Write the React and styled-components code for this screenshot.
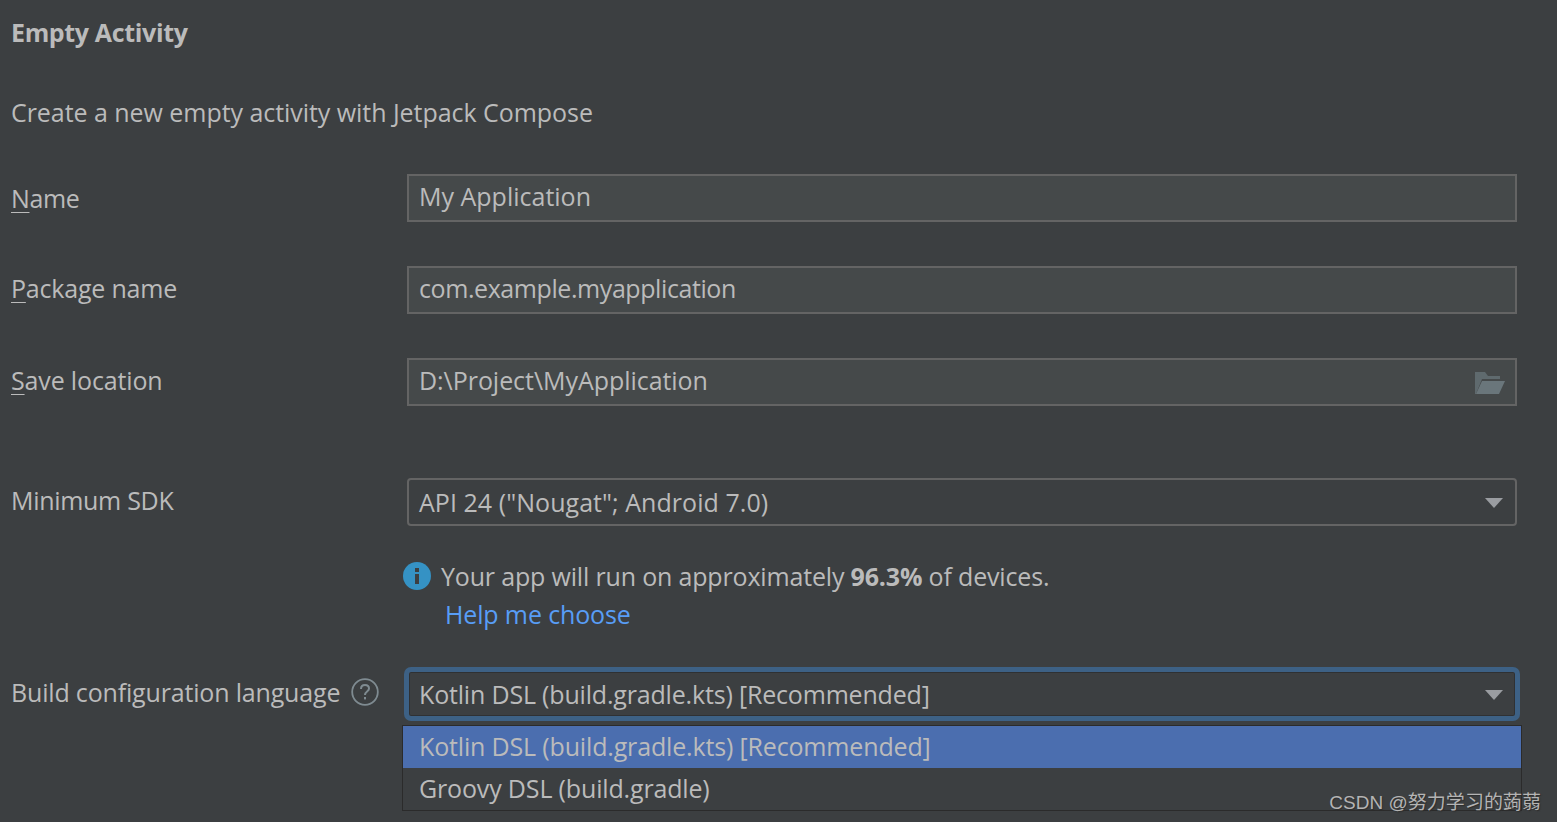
import React from 'react';
import styled, { createGlobalStyle } from 'styled-components';

const GlobalStyle = createGlobalStyle`
  html, body {
    margin: 0;
    padding: 0;
    background: #3c3f41;
  }
  body {
    font-family: "Open Sans", "Noto Sans", "Noto Sans CJK SC", sans-serif;
    color: #bbbbbb;
  }
`;

const FolderIcon = () => (
  <svg width="32" height="24" viewBox="0 0 32 24">
    <path d="M1 1h10l3 4h12v3H8L2 23H1z" fill="#5f6a6e" />
    <path d="M8 10h23l-6 13H2z" fill="#6a767b" />
  </svg>
);

const InfoIcon = () => (
  <svg width="28" height="28" viewBox="0 0 28 28">
    <circle cx="14" cy="14" r="14" fill="#3592c4" />
    <rect x="12" y="12" width="4" height="10" fill="#3c3f41" />
    <rect x="12" y="6" width="4" height="4" fill="#3c3f41" />
  </svg>
);

const HelpIcon = () => (
  <svg width="28" height="28" viewBox="0 0 28 28" fill="none">
    <circle cx="14" cy="14" r="12.8" stroke="#7f8b91" strokeWidth="1.8" />
    <path d="M10 11c0-2.6 1.8-4 4-4s4 1.4 4 3.6c0 3-4 3-4 6.4" stroke="#7f8b91" strokeWidth="2" />
    <rect x="13" y="19" width="2" height="2.4" fill="#7f8b91" />
  </svg>
);

const App = () => (
  <Page>
    <GlobalStyle />
    <Title>Empty Activity</Title>
    <Description>Create a new empty activity with Jetpack Compose</Description>
    <Row>
      <Label $track={-0.35}><span><u>N</u>ame</span></Label>
      <Field $track={0}>My Application</Field>
    </Row>
    <Row $top={44}>
      <Label $lift $track={-0.2}><span><u>P</u>ackage name</span></Label>
      <Field $track={-0.42}>com.example.myapplication</Field>
    </Row>
    <Row $top={44}>
      <Label $lift $track={-0.15}><span><u>S</u>ave location</span></Label>
      <Field $track={-0.05}>
        D:\Project\MyApplication
        <FolderSlot><FolderIcon /></FolderSlot>
      </Field>
    </Row>
    <Row $top={72}>
      <Label $lift $track={-0.3}><span>Minimum SDK</span></Label>
      <Combo $track={0.05}>
        API 24 ("Nougat"; Android 7.0)
        <Arrow />
      </Combo>
    </Row>
    <Info>
      <InfoLine>
        <InfoIcon />
        <span>Your app will run on approximately <b>96.3%</b> of devices.</span>
      </InfoLine>
      <HelpLink>Help me choose</HelpLink>
    </Info>
    <Row $top={38}>
      <Label $lift $track={-0.17}>
        <span>Build configuration language</span>
        <HelpIcon />
      </Label>
      <ComboWrap>
        <Combo $focused $track={-0.18}>
          Kotlin DSL (build.gradle.kts) [Recommended]
          <Arrow />
        </Combo>
        <Popup>
          <Option $selected>Kotlin DSL (build.gradle.kts) [Recommended]</Option>
          <Option>Groovy DSL (build.gradle)</Option>
        </Popup>
      </ComboWrap>
    </Row>
    <Watermark>CSDN @努力学习的蒟蒻</Watermark>
  </Page>
);

const Page = styled.div`
  position: relative;
  width: 1557px;
  height: 822px;
  overflow: hidden;
  box-sizing: border-box;
  padding: 0 40px 0 11px;
  background: #3c3f41;
  font-size: 25px;
  letter-spacing: -0.16px;
`;

const Title = styled.h1`
  margin: 0;
  padding-top: 14px;
  height: 36px;
  line-height: 36px;
  font-size: 25px;
  font-weight: 700;
  letter-spacing: -0.35px;
  color: #bbbbbb;
`;

const Description = styled.p`
  margin: 0;
  padding-top: 44px;
  height: 36px;
  line-height: 36px;
  letter-spacing: -0.05px;
  color: #bbbbbb;
`;

const Row = styled.div`
  display: flex;
  align-items: center;
  margin-top: ${({ $top }) => $top || 44}px;
`;

const Label = styled.label`
  display: flex;
  align-items: center;
  gap: 11px;
  width: 396px;
  flex: none;
  white-space: pre;
  padding-bottom: ${({ $lift }) => ($lift ? 4 : 0)}px;
  letter-spacing: ${({ $track }) => $track}px;
  u {
    text-underline-offset: 4px;
    text-decoration-thickness: 1px;
  }
`;

const Field = styled.div`
  position: relative;
  flex: 1;
  box-sizing: border-box;
  height: 48px;
  padding: 0 10px;
  line-height: 40px;
  letter-spacing: ${({ $track }) => $track}px;
  background: #45494a;
  border: 2px solid #646464;
`;

const FolderSlot = styled.span`
  position: absolute;
  right: 9px;
  top: 11px;
  display: flex;
`;

const ComboWrap = styled.div`
  position: relative;
  flex: 1;
`;

const Combo = styled.div`
  position: relative;
  flex: 1;
  box-sizing: border-box;
  height: 48px;
  padding: 0 10px;
  line-height: 44px;
  letter-spacing: ${({ $track }) => $track}px;
  background: #3c3f41;
  border: 2px solid ${({ $focused }) => ($focused ? '#3d6185' : '#646464')};
  border-radius: 4px;
  box-shadow: ${({ $focused }) => ($focused ? '0 0 0 3px #3d6185, inset 0 0 0 1px #2f3133' : 'none')};
`;

const Arrow = styled.span`
  position: absolute;
  right: 12px;
  top: 18px;
  width: 0;
  height: 0;
  border-left: 9px solid transparent;
  border-right: 9px solid transparent;
  border-top: 10px solid #9a9da1;
`;

const Info = styled.div`
  margin: 32px 0 0 392px;
`;

const InfoLine = styled.div`
  display: flex;
  align-items: center;
  gap: 10px;
  height: 36px;
  letter-spacing: -0.17px;
  b {
    font-weight: 700;
  }
`;

const HelpLink = styled.a`
  display: block;
  margin: 2px 0 0 42px;
  height: 36px;
  line-height: 36px;
  letter-spacing: -0.14px;
  color: #589df6;
`;

const Popup = styled.div`
  position: absolute;
  top: 55px;
  left: -5px;
  right: -5px;
  border: 1px solid #2b2b2b;
  background: #3c3f41;
`;

const Option = styled.div`
  box-sizing: border-box;
  height: 42px;
  padding: 0 16px;
  line-height: 40px;
  background: ${({ $selected }) => ($selected ? '#4b6eaf' : 'transparent')};
`;

const Watermark = styled.div`
  position: absolute;
  right: 16px;
  bottom: 6px;
  font-family: "Liberation Sans", "Noto Sans CJK SC", sans-serif;
  font-size: 19px;
  letter-spacing: 0.03px;
  line-height: 26px;
  color: #b4b4b4;
  text-shadow: 1px 1px 1px #2e2e2e;
`;

export default App;
